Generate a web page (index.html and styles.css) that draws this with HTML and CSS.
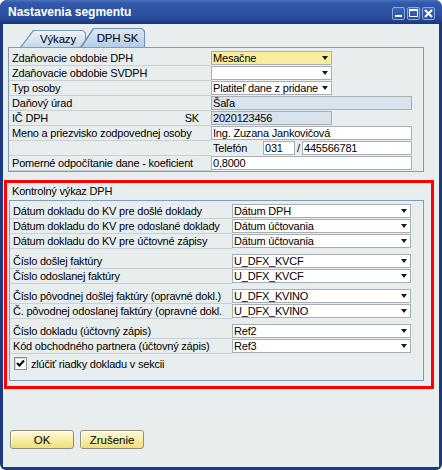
FILE: index.html
```html
<!DOCTYPE html>
<html lang="sk">
<head>
<meta charset="utf-8">
<title>Nastavenia segmentu</title>
<link rel="stylesheet" href="styles.css">
</head>
<body>
<div class="window">
  <div class="titlebar">
    <span class="title">Nastavenia segmentu</span>
    <div class="tbtns">
      <span class="tbtn"><svg width="11" height="11" viewBox="0 0 11 11"><rect x="2" y="7" width="7" height="2" fill="#fff"/></svg></span>
      <span class="tbtn"><svg width="11" height="11" viewBox="0 0 11 11"><rect x="1.5" y="1.5" width="8" height="7" fill="none" stroke="#fff"/><rect x="1" y="1" width="9" height="2" fill="#fff"/></svg></span>
      <span class="tbtn"><svg width="11" height="11" viewBox="0 0 11 11"><path d="M2 2 L9 9 M9 2 L2 9" stroke="#fff" stroke-width="2"/></svg></span>
    </div>
  </div>
  <div class="client">
    <div class="tabs">
      <div class="tab"><span>Výkazy</span></div>
      <div class="tab active"><span>DPH SK</span></div>
    </div>
    <div class="panel upper">
      <div class="row"><div class="lbl">Zdaňovacie obdobie DPH</div><div class="fld combo yellow narrow"><span>Mesačne</span><i class="arr"></i></div></div>
      <div class="row"><div class="lbl">Zdaňovacie obdobie SVDPH</div><div class="fld combo narrow"><span></span><i class="arr"></i></div></div>
      <div class="row"><div class="lbl">Typ osoby</div><div class="fld combo narrow"><span>Platiteľ dane z pridane</span><i class="arr"></i></div></div>
      <div class="row"><div class="lbl">Daňový úrad</div><div class="fld ro wide"><span>Šaľa</span></div></div>
      <div class="row"><div class="lbl split"><span>IČ DPH</span><span>SK</span></div><div class="fld ro narrow"><span>2020123456</span></div></div>
      <div class="row"><div class="lbl">Meno a priezvisko zodpovednej osoby</div><div class="fld wide"><span>Ing. Zuzana Jankovičová</span></div></div>
      <div class="row"><div class="lbl"></div><div class="phone"><span class="plbl">Telefón</span><div class="fld area"><span>031</span></div><span class="slash">/</span><div class="fld num"><span>445566781</span></div></div></div>
      <div class="row"><div class="lbl">Pomerné odpočítanie dane - koeficient</div><div class="fld wide"><span>0,8000</span></div></div>
    </div>
    <div class="redbox">
      <div class="sect">Kontrolný výkaz DPH</div>
      <div class="panel lower">
        <div class="group">
          <div class="row"><div class="lbl">Dátum dokladu do KV pre došlé doklady</div><div class="fld combo lw"><span>Dátum DPH</span><i class="arr"></i></div></div>
          <div class="row"><div class="lbl">Dátum dokladu do KV pre odoslané doklady</div><div class="fld combo lw"><span>Dátum účtovania</span><i class="arr"></i></div></div>
          <div class="row"><div class="lbl">Dátum dokladu do KV pre účtovné zápisy</div><div class="fld combo lw"><span>Dátum účtovania</span><i class="arr"></i></div></div>
        </div>
        <div class="group">
          <div class="row"><div class="lbl">Číslo došlej faktúry</div><div class="fld combo lw"><span>U_DFX_KVCF</span><i class="arr"></i></div></div>
          <div class="row"><div class="lbl">Číslo odoslanej faktúry</div><div class="fld combo lw"><span>U_DFX_KVCF</span><i class="arr"></i></div></div>
        </div>
        <div class="group">
          <div class="row"><div class="lbl">Číslo pôvodnej došlej faktúry (opravné dokl.)</div><div class="fld combo lw"><span>U_DFX_KVINO</span><i class="arr"></i></div></div>
          <div class="row"><div class="lbl">Č. pôvodnej odoslanej faktúry (opravné dokl.</div><div class="fld combo lw"><span>U_DFX_KVINO</span><i class="arr"></i></div></div>
        </div>
        <div class="group">
          <div class="row"><div class="lbl">Číslo dokladu (účtovný zápis)</div><div class="fld combo lw"><span>Ref2</span><i class="arr"></i></div></div>
          <div class="row"><div class="lbl">Kód obchodného partnera (účtovný zápis)</div><div class="fld combo lw"><span>Ref3</span><i class="arr"></i></div></div>
        </div>
        <div class="check">
          <span class="box"><svg width="11" height="11" viewBox="0 0 11 11"><path d="M2 5 L4.5 7.5 L9 2.5" fill="none" stroke="#000" stroke-width="2"/></svg></span>
          <span>zlúčiť riadky dokladu v sekcii</span>
        </div>
      </div>
    </div>
    <div class="buttons">
      <button class="btn">OK</button>
      <button class="btn">Zrušenie</button>
    </div>
  </div>
</div>
</body>
</html>
```
FILE: styles.css
```css
* { box-sizing: border-box; }
html, body { margin: 0; padding: 0; }
body {
  width: 442px; height: 470px; overflow: hidden;
  background: #ffffff;
  font-family: "Liberation Sans", Arial, sans-serif;
  font-size: 11px;
  letter-spacing: -0.2px;
  color: #000;
}
.window {
  width: 442px; height: 470px;
  display: flex; flex-direction: column;
  background: #1b3a80;
  border-radius: 7px 7px 6px 6px;
  overflow: hidden;
}
.titlebar {
  height: 24px;
  flex: none;
  display: flex; align-items: center; justify-content: space-between;
  padding: 0 7px 0 8px;
  background: linear-gradient(#4a70c0 0, #3259a9 3px, #2c52a2 60%, #20428e 88%, #183677 100%);
}
.title {
  color: #fff; font-weight: bold; font-size: 12px; letter-spacing: 0;
}
.tbtns { display: flex; gap: 2px; margin-top: 2px; }
.tbtn {
  width: 13px; height: 13px;
  display: flex; align-items: center; justify-content: center;
  border: 1px solid #8ea8dc;
  border-radius: 2px;
  background: linear-gradient(#4066b6, #2a4f9c);
}
.client {
  flex: 1;
  margin: 0 3px 3px 3px;
  background: #e8eeee;
  display: flex; flex-direction: column;
}
.tabs {
  display: flex;
  height: 19px;
  margin-top: 4px;
  padding-left: 17px;
  align-items: flex-end;
  position: relative;
  z-index: 1;
}
.tab {
  position: relative;
  width: 66px; height: 17px;
  background: #7a97bd;
  clip-path: polygon(0 100%, 13px 0, calc(100% - 3px) 0, 100% 3px, 100% 100%);
  display: flex; align-items: center; justify-content: center;
  padding-left: 10px;
  font-size: 11.5px;
}
.tab::before {
  content: "";
  position: absolute;
  left: 1.5px; top: 1px; right: 1px; bottom: 0;
  background: linear-gradient(#eef4fb, #c4d6ec);
  clip-path: polygon(0 100%, 12.5px 0, calc(100% - 2.5px) 0, 100% 2.5px, 100% 100%);
}
.tab span { position: relative; }
.tab.active {
  height: 19px;
  width: 65px;
  margin-left: -6px;
  background: #6f8fb8;
}
.tab.active::before { background: linear-gradient(#dbe8f6, #b3cae6); bottom: -1px; }
.panel {
  border: 1px solid #7f9db9;
}
.upper {
  margin-left: 5px;
  width: 416px;
  height: 125px;
  padding-top: 3px;
}
.row { display: flex; height: 15px; }
.lbl {
  height: 15px;
  border-bottom: 1px solid #c8d0d4;
  padding-left: 3px;
  line-height: 14px;
  white-space: nowrap;
  overflow: hidden;
  flex: none;
}
.upper .lbl { width: 202px; }
.lbl.split { display: flex; justify-content: space-between; padding-right: 12px; }
.fld {
  height: 14px;
  border: 1px solid #a7aeb5;
  background: #fff;
  display: flex; align-items: center;
  padding-left: 1px;
  line-height: 12px;
  white-space: nowrap;
  overflow: hidden;
  flex: none;
}
.fld span { flex: 1; overflow: hidden; }
.yellow { background: #f8ee9e; }
.ro { background: #d9e3ee; }
.narrow { width: 121px; }
.wide { width: 201px; }
.arr {
  width: 0; height: 0;
  border-left: 3.5px solid transparent;
  border-right: 3.5px solid transparent;
  border-top: 4px solid #1a1a1a;
  margin: 0 3px 0 1px;
  flex: none;
}
.phone { display: flex; align-items: flex-start; }
.plbl { width: 52px; padding-left: 2px; line-height: 14px; }
.area { width: 32px; }
.slash { width: 7px; text-align: center; line-height: 14px; }
.num { width: 110px; }
.redbox {
  margin-top: 8px;
  margin-left: 1px;
  width: 430px;
  height: 209px;
  border: 3px solid #ff0000;
  padding-top: 1px;
}
.sect { height: 16px; line-height: 15px; padding-left: 5px; }
.lower {
  margin-left: 2px;
  width: 415px;
  height: 181px;
  padding-top: 3px;
}
.lower .lbl { width: 222px; }
.lw { width: 179px; }
.group + .group { margin-top: 5px; }
.check {
  display: flex; align-items: center; gap: 4px;
  height: 15px;
  margin-top: 2px;
  padding-left: 4px;
}
.box {
  width: 13px; height: 13px;
  border: 1px solid #8a9399;
  background: #fff;
  display: flex; align-items: center; justify-content: center;
  box-shadow: inset 1px 1px 0 #d4d8da;
}
.buttons {
  display: flex; gap: 6px;
  margin-top: 41px;
  padding-left: 7px;
}
.btn {
  width: 64px; height: 19px;
  border: 1px solid #8d8d86;
  border-radius: 3px;
  background: linear-gradient(#fffbe0, #f8eda5 50%, #f1de78);
  font-family: "Liberation Sans", Arial, sans-serif;
  font-size: 11.5px;
  color: #000;
  padding: 0;
  box-shadow: inset 1px 1px 0 #fff;
}
```
